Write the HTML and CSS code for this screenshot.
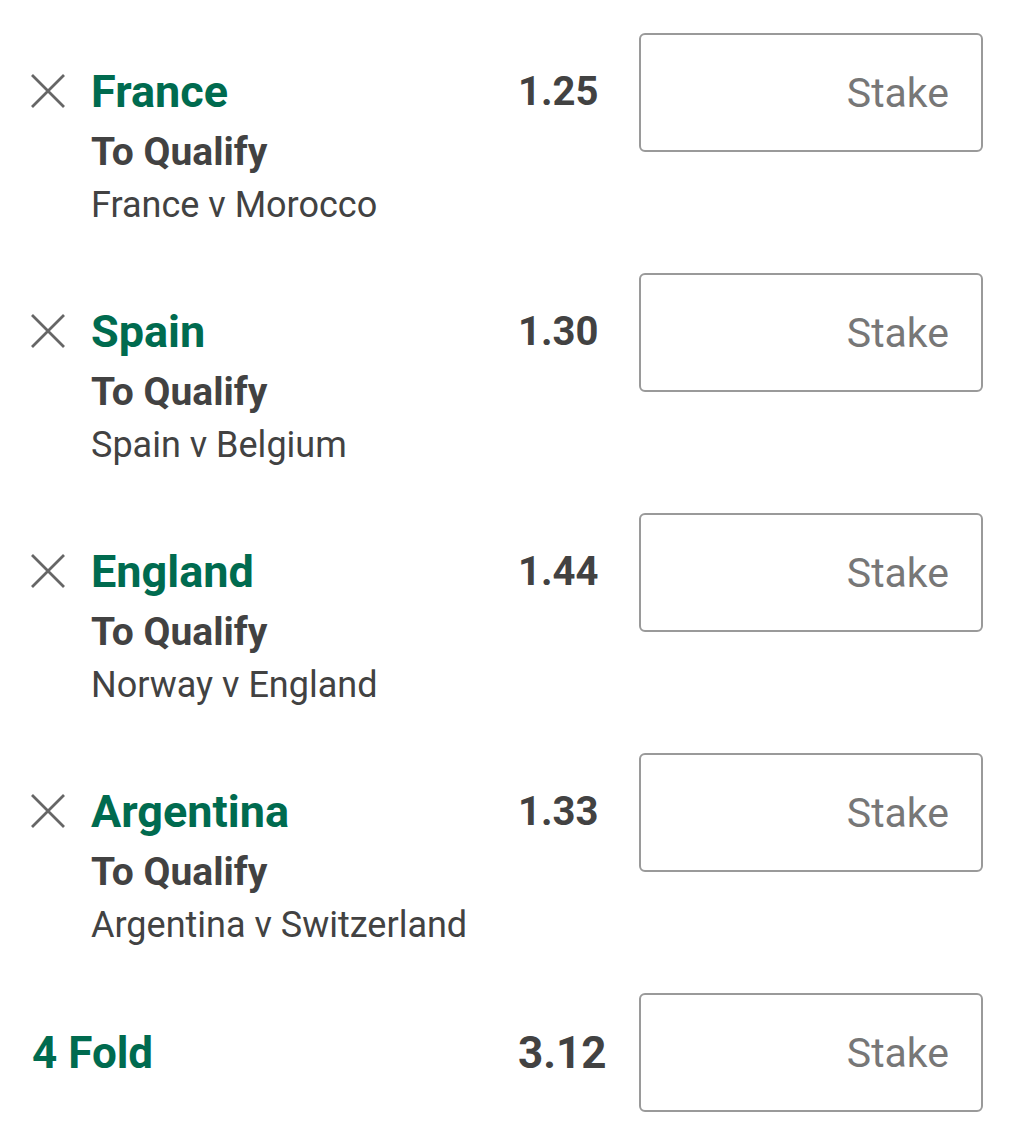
FILE: index.html
```html
<!DOCTYPE html>
<html lang="en">
<head>
    <meta charset="UTF-8">
    <meta name="viewport" content="width=device-width, initial-scale=1.0">
    <title>Bet Slip</title>
    <link rel="stylesheet" href="styles.css">
</head>
<body>
    <div class="slip">
        <div class="bet">
            <button class="remove" aria-label="Remove">
                <svg viewBox="0 0 34 34" width="34" height="34"><path d="M1 1L33 33M33 1L1 33" /></svg>
            </button>
            <div class="info">
                <div class="selection">France</div>
                <div class="market">To Qualify</div>
                <div class="event">France v Morocco</div>
            </div>
            <div class="odds">1.25</div>
            <input class="stake" type="text" placeholder="Stake">
        </div>
        <div class="bet">
            <button class="remove" aria-label="Remove">
                <svg viewBox="0 0 34 34" width="34" height="34"><path d="M1 1L33 33M33 1L1 33" /></svg>
            </button>
            <div class="info">
                <div class="selection">Spain</div>
                <div class="market">To Qualify</div>
                <div class="event">Spain v Belgium</div>
            </div>
            <div class="odds">1.30</div>
            <input class="stake" type="text" placeholder="Stake">
        </div>
        <div class="bet">
            <button class="remove" aria-label="Remove">
                <svg viewBox="0 0 34 34" width="34" height="34"><path d="M1 1L33 33M33 1L1 33" /></svg>
            </button>
            <div class="info">
                <div class="selection">England</div>
                <div class="market">To Qualify</div>
                <div class="event">Norway v England</div>
            </div>
            <div class="odds">1.44</div>
            <input class="stake" type="text" placeholder="Stake">
        </div>
        <div class="bet">
            <button class="remove" aria-label="Remove">
                <svg viewBox="0 0 34 34" width="34" height="34"><path d="M1 1L33 33M33 1L1 33" /></svg>
            </button>
            <div class="info">
                <div class="selection">Argentina</div>
                <div class="market">To Qualify</div>
                <div class="event">Argentina v Switzerland</div>
            </div>
            <div class="odds">1.33</div>
            <input class="stake" type="text" placeholder="Stake">
        </div>
        <div class="bet fold">
            <div class="info">
                <div class="fold-name">4 Fold</div>
            </div>
            <div class="odds fold-odds">3.12</div>
            <input class="stake" type="text" placeholder="Stake">
        </div>
    </div>
</body>
</html>
```

FILE: styles.css
```css
body {
    font-family: Roboto, "Liberation Sans", sans-serif;
    background-color: #ffffff;
    color: #424242;
    margin: 0;
    padding: 0;
}
.slip {
    width: 1013px;
}
.bet {
    display: flex;
    align-items: flex-start;
    height: 240px;
    box-sizing: border-box;
    padding: 33px 30px 0 31px;
}
.remove {
    width: 34px;
    height: 34px;
    margin: 41px 26px 0 0;
    padding: 0;
    border: none;
    background: none;
    cursor: pointer;
}
.remove svg {
    display: block;
}
.remove path {
    stroke: #666666;
    stroke-width: 2.8;
    fill: none;
}
.info {
    flex: 1;
    padding-top: 33px;
}
.selection {
    font-size: 45px;
    line-height: 52px;
    font-weight: bold;
    color: #006b4f;
}
.market {
    font-size: 39px;
    line-height: 52px;
    font-weight: bold;
    margin-top: 8px;
}
.event {
    font-size: 36px;
    line-height: 52px;
    margin-top: 1px;
}
.odds {
    width: 121px;
    padding-top: 35px;
    font-size: 40px;
    line-height: 48px;
    font-weight: bold;
}
.stake {
    width: 344px;
    height: 119px;
    box-sizing: border-box;
    border: 2px solid #9a9a9a;
    border-radius: 6px;
    padding: 0 32px 0 0;
    text-align: right;
    font-family: Roboto, "Liberation Sans", sans-serif;
    font-size: 41px;
    color: #424242;
    outline: none;
}
.stake::placeholder {
    color: #777777;
}
.fold {
    height: 152px;
    padding-left: 32px;
}
.fold .info {
    padding-top: 34px;
}
.fold-name {
    font-size: 44px;
    line-height: 52px;
    font-weight: bold;
    color: #006b4f;
}
.fold-odds {
    padding-top: 34px;
    font-size: 44px;
    line-height: 52px;
}
```
